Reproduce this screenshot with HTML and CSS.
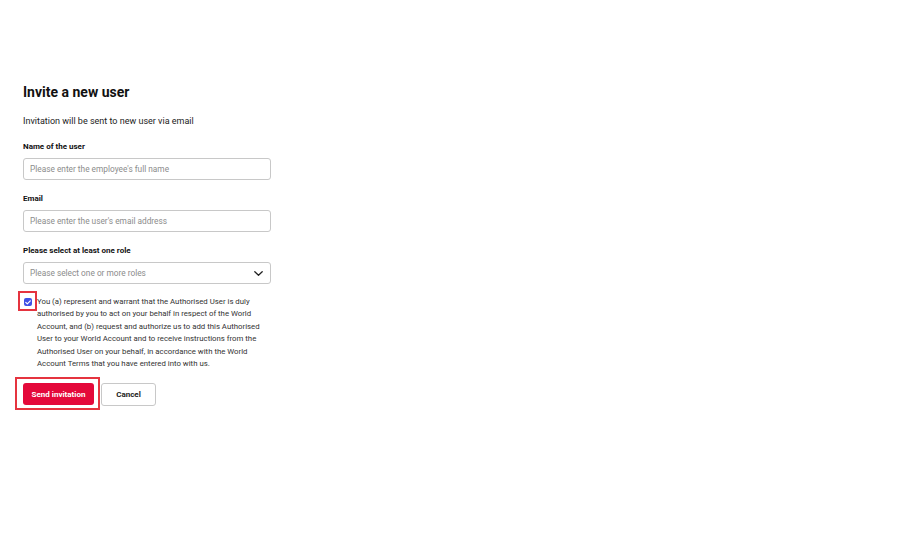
FILE: index.html
```html
<!DOCTYPE html>
<html lang="en">
<head>
    <meta charset="UTF-8">
    <title>Invite a new user</title>
    <link rel="stylesheet" href="styles.css">
</head>
<body>

    <div class="container">
        <h2 class="heading">Invite a new user</h2>
        <p class="intro">Invitation will be sent to new user via email</p>

        <div class="field">
            <label class="field-label" for="fullName">Name of the user</label>
            <input type="text" id="fullName" placeholder="Please enter the employee's full name">
        </div>

        <div class="field">
            <label class="field-label" for="email">Email</label>
            <input type="text" id="email" placeholder="Please enter the user's email address">
        </div>

        <div class="field">
            <label class="field-label">Please select at least one role</label>
            <div class="select-box">
                <span class="select-placeholder">Please select one or more roles</span>
                <svg class="chevron" width="9" height="5" viewBox="0 0 9 5">
                    <path d="M0.8 0.8l3.7 3.4 3.7-3.4" fill="none" stroke="#222" stroke-width="1.3" stroke-linecap="round" stroke-linejoin="round"/>
                </svg>
            </div>
        </div>

        <div class="consent">
            <span class="checkbox">
                <svg width="6" height="5" viewBox="0 0 6 5">
                    <path d="M0.8 2.4l1.5 1.5 3-3" fill="none" stroke="#fff" stroke-width="1.2" stroke-linecap="round" stroke-linejoin="round"/>
                </svg>
                <span class="marker check-marker"></span>
            </span>
            <p class="consent-text">You (a) represent and warrant that the Authorised User is duly authorised by you to act on your behalf in respect of the World Account, and (b) request and authorize us to add this Authorised User to your World Account and to receive instructions from the Authorised User on your behalf, in accordance with the World Account Terms that you have entered into with us.</p>
        </div>

        <div class="actions">
            <div class="send-wrap">
                <button class="btn btn-primary">Send invitation</button>
                <span class="marker send-marker"></span>
            </div>
            <button class="btn btn-secondary">Cancel</button>
        </div>
    </div>

</body>
</html>
```

FILE: styles.css
```css
/* General Reset */
* {
    margin: 0;
    padding: 0;
    box-sizing: border-box;
}

body, html {
    height: 100%;
    font-family: Roboto, 'Liberation Sans', sans-serif;
    background: #fff;
    color: #1a1a1a;
}

/* Container */
.container {
    width: 272px;
    padding: 84px 0 0 23px;
    display: flex;
    flex-direction: column;
}

.heading {
    font-size: 14px;
    font-weight: bold;
    color: #111;
    line-height: 16px;
}

.intro {
    font-size: 9px;
    color: #222;
    line-height: 12px;
    margin-top: 15px;
}

/* Fields */
.field {
    display: flex;
    flex-direction: column;
    margin-top: 15px;
}

.field + .field {
    margin-top: 14px;
}

.field-label {
    font-size: 8px;
    font-weight: bold;
    color: #111;
    line-height: 10px;
    margin-bottom: 6px;
}

input,
.select-box {
    width: 248px;
    height: 22px;
    padding: 0 7px 0 6px;
    font-family: inherit;
    font-size: 8.3px;
    border: 1px solid #c8c8c8;
    border-radius: 3px;
    background: #fff;
    color: #222;
}

input::placeholder {
    color: #8c8c8c;
}

.select-box {
    display: flex;
    align-items: center;
    justify-content: space-between;
}

.select-placeholder {
    color: #8c8c8c;
}

/* Consent */
.consent {
    display: flex;
    align-items: flex-start;
    margin-top: 12px;
}

.checkbox {
    position: relative;
    width: 8px;
    height: 8px;
    margin: 2px 5px 0 1px;
    flex-shrink: 0;
    border-radius: 2px;
    background: #3f51e6;
    display: flex;
    align-items: center;
    justify-content: center;
}

.consent-text {
    width: 228px;
    font-size: 7.8px;
    line-height: 12.4px;
    color: #333;
}

/* Red review markers drawn over the controls */
.marker {
    position: absolute;
    border: 2px solid #e5343f;
    pointer-events: none;
}

.check-marker {
    top: -7px;
    left: -6px;
    right: -5px;
    bottom: -5px;
}

.send-wrap {
    position: relative;
    display: flex;
}

.send-marker {
    top: -6px;
    left: -8px;
    right: -6px;
    bottom: -5px;
}

/* Buttons */
.actions {
    display: flex;
    align-items: flex-start;
    gap: 7px;
    margin-top: 13px;
}

.btn {
    height: 22px;
    font-family: inherit;
    font-size: 8px;
    font-weight: bold;
    border-radius: 3px;
    cursor: pointer;
}

.btn-primary {
    width: 71px;
    background: #e4093a;
    color: #fff;
    border: none;
}

.btn-secondary {
    width: 55px;
    height: 23px;
    background: #fff;
    color: #222;
    border: 1px solid #c8c8c8;
}
```
